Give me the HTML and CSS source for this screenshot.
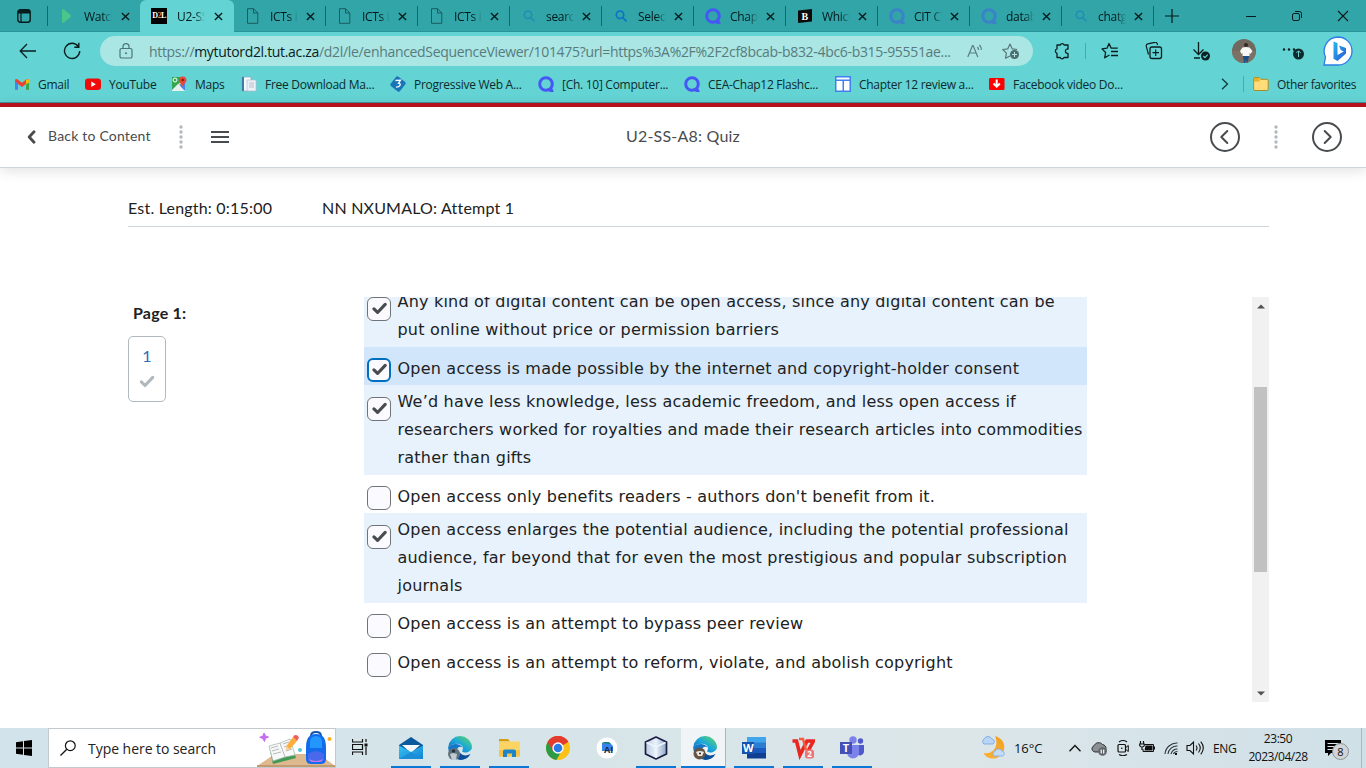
FILE: index.html
```html
<!DOCTYPE html>
<html lang="en">
<head>
<meta charset="utf-8">
<title>U2-SS-A8: Quiz</title>
<link rel="stylesheet" href="styles.css">
</head>
<body>
<svg class="defs" width="0" height="0" aria-hidden="true">
  <defs>
    <linearGradient id="edgeG" x1="0" y1="1" x2="1" y2="0"><stop offset="0" stop-color="#0b5db5"/><stop offset=".5" stop-color="#1ba7dc"/><stop offset="1" stop-color="#62dc5a"/></linearGradient>
    <linearGradient id="bingG" x1="0" y1="0" x2="1" y2="1"><stop offset="0" stop-color="#29b9ee"/><stop offset="1" stop-color="#2855d8"/></linearGradient>
    <linearGradient id="mailG" x1="0" y1="0" x2="1" y2="1"><stop offset="0" stop-color="#35c5f4"/><stop offset="1" stop-color="#1382d4"/></linearGradient>
    <linearGradient id="moonG" x1="0" y1="0" x2="0" y2="1"><stop offset="0" stop-color="#f2a01e"/><stop offset="1" stop-color="#fbb034"/></linearGradient>
    <linearGradient id="cubeG" x1="0" y1="0" x2="1" y2="0"><stop offset="0" stop-color="#bccbe0"/><stop offset=".5" stop-color="#e9f3fb"/><stop offset="1" stop-color="#8ba6c6"/></linearGradient>
  </defs>
  <symbol id="x" viewBox="0 0 10 10"><path d="M1 1l8 8M9 1l-8 8" stroke="#071a1c" stroke-width="1.5"/></symbol>
  <symbol id="page" viewBox="0 0 16 16"><path d="M2.500.7h6l4.300 4.300v10.300H2.500zM8.500.7V5h4.300" fill="none" stroke="#1a5a60" stroke-width="1"/></symbol>
  <symbol id="lens" viewBox="0 0 16 16"><circle cx="7" cy="6.700" r="3.700" fill="none" stroke="currentColor" stroke-width="1.600"/><path d="M9.700 9.500l3.800 3.800" stroke="currentColor" stroke-width="1.700"/></symbol>
  <symbol id="quiz" viewBox="0 0 16 16"><circle cx="8" cy="8" r="6.300" fill="none" stroke="currentColor" stroke-width="3"/><path d="M9 12.500h5.500L15.800 16h-4z" fill="currentColor"/></symbol>
  <symbol id="tick" viewBox="0 0 14 12"><path d="M1.800 6.300l3.400 3.400L12.300 2.200" fill="none" stroke="currentColor" stroke-width="2.900" stroke-linecap="round" stroke-linejoin="round"/></symbol>
  <symbol id="dots" viewBox="0 0 4 24"><path d="M2 2v20.500" stroke="#b1b9be" stroke-width="3.400" stroke-linecap="round" stroke-dasharray="0 5"/></symbol>
  <symbol id="edge" viewBox="0 0 24 24"><path d="M12 0a12 12 0 0 1 12 11c0 5-7 6.500-9.500 4.800-1-.8.8-1.800.4-4.300C14 7.500 6 6 .3 11A12 12 0 0 1 12 0z" fill="url(#edgeG)"/><path d="M.2 11C4.500 6.300 13 7.500 14.700 11.700 12 9.500 8.500 11.500 9 15.500c.6 5 7 7 13 3A12 12 0 0 1 .2 11z" fill="#1478c8"/><path d="M12 16.800c3 3.500 7 3 10.500 1.200A12 12 0 0 1 12 24c-3-1-4-4-3-8z" fill="#0b4d99"/></symbol>
</svg>

<header class="browser">
  <nav class="tabs">
    <div class="tab-menu"><svg width="14" height="14" viewBox="0 0 14 14"><rect x=".8" y=".8" width="12.400" height="12.400" rx="2.500" fill="none" stroke="#071a1c" stroke-width="1.400"/><path d="M1 2.800h12" stroke="#071a1c" stroke-width="3.400"/><path d="M4 4v9" stroke="#071a1c" stroke-width="1.200"/></svg></div>
    <div class="tab sep"><svg class="fav" viewBox="0 0 16 16"><path d="M1 2.500C1 1 2 .8 3 1.600l6.200 5.200c.9.800.9 1.600 0 2.400L3 14.500c-1 .8-2 .3-2-1z" fill="#4cc58b"/></svg><span class="name">Watch</span><svg class="close"><use href="#x"/></svg></div>
    <div class="tab active"><span class="fav d2l">D<i>2</i>L</span><span class="name">U2-SS</span><svg class="close"><use href="#x"/></svg></div>
    <div class="tab"><svg class="fav"><use href="#page"/></svg><span class="name">ICTs in</span><svg class="close"><use href="#x"/></svg></div>
    <div class="tab sep"><svg class="fav"><use href="#page"/></svg><span class="name">ICTs in</span><svg class="close"><use href="#x"/></svg></div>
    <div class="tab sep"><svg class="fav"><use href="#page"/></svg><span class="name">ICTs in</span><svg class="close"><use href="#x"/></svg></div>
    <div class="tab sep"><svg class="fav faint-blue"><use href="#lens"/></svg><span class="name">search</span><svg class="close"><use href="#x"/></svg></div>
    <div class="tab sep"><svg class="fav blue"><use href="#lens"/></svg><span class="name">Select</span><svg class="close"><use href="#x"/></svg></div>
    <div class="tab sep"><svg class="fav violet"><use href="#quiz"/></svg><span class="name">Chap</span><svg class="close"><use href="#x"/></svg></div>
    <div class="tab sep"><svg class="fav" viewBox="0 0 16 16"><path d="M1 2.500L15 1v12.500L1 15z" fill="#0b0b0b"/><text x="4.500" y="11.700" class="b-mark">B</text></svg><span class="name">Which</span><svg class="close"><use href="#x"/></svg></div>
    <div class="tab sep"><svg class="fav faint-violet"><use href="#quiz"/></svg><span class="name">CIT Ch</span><svg class="close"><use href="#x"/></svg></div>
    <div class="tab sep"><svg class="fav faint-violet"><use href="#quiz"/></svg><span class="name">datab</span><svg class="close"><use href="#x"/></svg></div>
    <div class="tab sep"><svg class="fav faint-blue"><use href="#lens"/></svg><span class="name">chatg</span><svg class="close"><use href="#x"/></svg></div>
    <div class="new-tab sep"><svg width="14" height="14" viewBox="0 0 14 14"><path d="M7 0v14M0 7h14" stroke="#071a1c" stroke-width="1.200"/></svg></div>
    <div class="window-buttons">
      <svg viewBox="0 0 12 12"><path d="M1 6.500h10" stroke="#071a1c"/></svg>
      <svg viewBox="0 0 12 12"><rect x="1.500" y="3.500" width="7" height="7" rx="1.500" fill="none" stroke="#071a1c"/><path d="M4 1.500h4.500a2 2 0 0 1 2 2V8" fill="none" stroke="#071a1c"/></svg>
      <svg viewBox="0 0 12 12"><path d="M1 1l10 10M11 1L1 11" stroke="#071a1c" stroke-width="1.100"/></svg>
    </div>
  </nav>

  <div class="toolbar">
    <svg class="back" viewBox="0 0 18 16"><path d="M17 8H1.500M8 1L1.200 8 8 15" fill="none" stroke="#0a1e20" stroke-width="1.300"/></svg>
    <svg class="reload" viewBox="0 0 18 18"><path d="M15.300 4.500A7.600 7.600 0 1 0 16.700 9M15.800 .8v4.400h-4.500" fill="none" stroke="#0a1e20" stroke-width="1.400"/></svg>
    <div class="address">
      <svg class="lock" viewBox="0 0 14 16"><rect x="1" y="5.500" width="12" height="9.500" rx="1.600" fill="none" stroke="#4f7577" stroke-width="1.200"/><path d="M4 5.500V3.600a3 3 0 0 1 6 0v1.900" fill="none" stroke="#4f7577" stroke-width="1.200"/><circle cx="7" cy="10.200" r="1" fill="#4f7577"/></svg>
      <span class="url">https://<b>mytutord2l.tut.ac.za</b>/d2l/le/enhancedSequenceViewer/101475?url=https%3A%2F%2F2cf8bcab-b832-4bc6-b315-95551ae...</span>
      <svg class="read" viewBox="0 0 16 14"><path d="M.8 13L5.500 1.500h.6L10.800 13M2.500 9h6.700M10.500 3a4 4 0 0 1 1 3M12.500 1a6.500 6.500 0 0 1 1.800 5" fill="none" stroke="#5b7d7f" stroke-width="1.200"/></svg>
      <svg class="addfav" viewBox="0 0 18 18"><path d="M8 14l-4.500 2.200.9-5L.8 7.500l5-.7L8 2l2.200 4.800 5 .7" fill="none" stroke="#5b7778" stroke-width="1.200" stroke-linejoin="round"/><circle cx="12.500" cy="12.500" r="4.500" fill="#4f6c6e"/><path d="M12.500 10v5M10 12.500h5" stroke="#a9e6e4"/></svg>
    </div>
    <svg class="tool puzzle" viewBox="0 0 18 18"><path d="M4 3h3.300a2 2 0 0 1 3.800 0H15v4h-1a2.300 2.300 0 0 0 0 4.400h1v4.100h-4a2 2 0 0 1-3.800 0H4v-4.200a2.300 2.300 0 0 1 0-4.400z" fill="none" stroke="#0a1e20" stroke-width="1.300" stroke-linejoin="round"/></svg>
    <i class="rule"></i>
    <svg class="tool favs" viewBox="0 0 18 18"><path d="M8.500 13L3.700 15.800l.9-5.300L1 6.900l5-.7L8 1.500l2.200 4.700h6.500M10 9.500h7M10 13.500h7" fill="none" stroke="#0a1e20" stroke-width="1.300" stroke-linejoin="round"/></svg>
    <svg class="tool collections" viewBox="0 0 18 18"><path d="M3.500 12.500L1.300 4.300a2 2 0 0 1 1.500-2.500l7-1.500a2 2 0 0 1 2.400 1.500l.4 1.200" fill="none" stroke="#0a1e20" stroke-width="1.200"/><rect x="5" y="5" width="11.500" height="11.500" rx="2" fill="none" stroke="#0a1e20" stroke-width="1.300"/><path d="M10.700 7.500v6.500M7.500 10.700H14" stroke="#0a1e20" stroke-width="1.200"/></svg>
    <svg class="tool downloads" viewBox="0 0 18 20"><path d="M6.500 1v12M1.500 8.500l5 5 5-5M2 17h6" fill="none" stroke="#0a1e20" stroke-width="1.300"/><circle cx="13.500" cy="15" r="4.500" fill="#0b2224"/><path d="M11.300 15l1.600 1.600 2.800-3" fill="none" stroke="#63d3d3" stroke-width="1.200"/></svg>
    <svg class="avatar" viewBox="0 0 24 24"><circle cx="12" cy="12" r="12" fill="#716960"/><path d="M0 12h24a12 12 0 0 1-24 0z" fill="#7d7064"/><circle cx="14" cy="6" r="2" fill="#342824"/><path d="M10.500 8.500q3.500-1 7 0l3 3.500-2 3-1-1v3h-7v-3l-1 1L8 12z" fill="#f7f7f5"/><path d="M11 17h6l-1.300 6.500h-1.200L14 20l-.8 4H12z" fill="#1c4f86"/></svg>
    <svg class="more" viewBox="0 0 22 18"><g fill="#0a1e20"><circle cx="2" cy="7.500" r="1.200"/><circle cx="7" cy="7.500" r="1.200"/><circle cx="12" cy="7.500" r="1.200"/></g><circle cx="16.500" cy="12" r="5.500" fill="#102a2c"/><path d="M16.500 15V9M14.300 11l2.200-2.200 2.200 2.200" fill="none" stroke="#68cccd"/></svg>
    <svg class="bing" viewBox="0 0 30 30"><path d="M15 1a14 14 0 1 1 0 28H1l1.500-8A14 14 0 0 1 15 1z" fill="#fff" stroke="#2b7ee8" stroke-width="1.300"/><path d="M10.500 5.500l4 1.400v12l6.300-3.500-3.100-1.500-1.700-4.300 7 2.500v5.300L14.500 25l-4-2.300z" fill="url(#bingG)"/></svg>
  </div>

  <div class="bookmarks">
    <div class="mark w71"><svg viewBox="0 0 16 16"><path d="M1 3.500v10h3V8l4 3 4-3v5.500h3v-10L13 3 8 6.700 3 3z" fill="#ea4335"/><path d="M1 5v8.500h3V7.700z" fill="#4285f4"/><path d="M15 5v8.500h-3V7.700z" fill="#34a853"/><path d="M12 4l2-1 1 1v2.500l-3 2z" fill="#fbbc04"/></svg><span>Gmail</span></div>
    <div class="mark w87"><svg viewBox="0 0 16 16"><rect y="2.500" width="16" height="11.500" rx="3.200" fill="#f00b0b"/><path d="M6.300 5.500l4.500 2.700-4.500 2.700z" fill="#fff"/></svg><span>YouTube</span></div>
    <div class="mark w69"><svg viewBox="0 0 16 16"><path d="M1 1h13v13H1z" fill="#33a852"/><path d="M1 14L14 2v12z" fill="#4285f4"/><path d="M1 15L11 4l2 2-9 9z" fill="#f5df75"/><path d="M1 14l6-6 7 7H1z" fill="#e8f0ee"/><path d="M8 8l6 6V9z" fill="#4285f4"/><circle cx="4" cy="4" r="2" fill="none" stroke="#fff"/><path d="M11.500 11C11 8 8 7 8 4.200a3.700 3.700 0 0 1 7.400 0C15.400 7 12 8 11.500 11z" fill="#e8453c"/><circle cx="11.700" cy="4" r="1.300" fill="#822119"/></svg><span>Maps</span></div>
    <div class="mark w149"><svg viewBox="0 0 16 16"><path d="M1 1h9v14H1z" fill="#f5fafc" stroke="#7ea9c1" stroke-width=".7"/><path d="M1 1h2v14H1z" fill="#407da5"/><path d="M6 4h9v11H6z" fill="#edf1f7" stroke="#b0bdcc" stroke-width=".7"/><path d="M8 7h5M8 9h5M8 11h5" stroke="#b8c0cd"/></svg><span>Free Download Ma...</span></div>
    <div class="mark w148"><svg viewBox="0 0 16 16"><rect x="2" y="2" width="12" height="12" rx="2" fill="#1a75b8" transform="rotate(38 8 8)"/><path d="M5.500 4.500l5-.3-2 3c3 .3 2 4-2.500 4" fill="none" stroke="#fff" stroke-width="1.300"/></svg><span>Progressive Web A...</span></div>
    <div class="mark w146"><svg class="violet"><use href="#quiz"/></svg><span>[Ch. 10] Computer...</span></div>
    <div class="mark w151"><svg class="violet"><use href="#quiz"/></svg><span>CEA-Chap12 Flashc...</span></div>
    <div class="mark w154"><svg viewBox="0 0 16 16"><path d="M0 0h16v16H0z" fill="#3f7ff0"/><path d="M1.500 1.500h13v2h-13zM1.500 5h6v9.500h-6zM9 5h5.500v9.500H9z" fill="#fff"/></svg><span>Chapter 12 review a...</span></div>
    <div class="mark w230"><svg viewBox="0 0 16 16"><rect y="2" width="15.500" height="12" rx="1.200" fill="#f00"/><path d="M7.700 3.500v7M4.500 7.500l3.200 3.200 3.200-3.200" fill="none" stroke="#fff" stroke-width="2"/></svg><span>Facebook video Do...</span></div>
    <svg class="overflow" viewBox="0 0 8 12"><path d="M1 .7L6.500 6 1 11.300" fill="none" stroke="#0e3a3c" stroke-width="1.300"/></svg>
    <i class="rule"></i>
    <div class="mark others"><svg viewBox="0 0 16 16"><path d="M.6 3V13.200q0 1.300 1.300 1.300h12q1.300 0 1.300-1.300V4.500q0-1.200-1.300-1.200H8L6.300 1.600H2Q.6 1.600.6 3z" fill="#ffdc78" stroke="#a8841c" stroke-width=".9"/><path d="M.8 5.500h5L8 3.300H6.300L5.500 1.900H1z" fill="#e9b22c"/></svg><span>Other favorites</span></div>
  </div>
</header>

<div class="viewer-bar">
  <svg class="chev" viewBox="0 0 9 14"><path d="M7 1.800L2.200 7 7 12.200" fill="none" stroke="#494c4e" stroke-width="2.800" stroke-linecap="round" stroke-linejoin="round"/></svg>
  <span class="back-text">Back to Content</span>
  <svg class="dots"><use href="#dots"/></svg>
  <svg class="burger" viewBox="0 0 18 14"><path d="M0 2h18M0 7h18M0 12h18" stroke="#494c4e" stroke-width="2"/></svg>
  <h1 class="title">U2-SS-A8: Quiz</h1>
  <svg class="circle" viewBox="0 0 30 30"><circle cx="15" cy="15" r="14" fill="none" stroke="#494c4e" stroke-width="2"/><path d="M17.300 9l-6 6 6 6" fill="none" stroke="#494c4e" stroke-width="2" stroke-linecap="round" stroke-linejoin="round"/></svg>
  <svg class="dots right-dots"><use href="#dots"/></svg>
  <svg class="circle" viewBox="0 0 30 30"><circle cx="15" cy="15" r="14" fill="none" stroke="#494c4e" stroke-width="2"/><path d="M12.700 9l6 6-6 6" fill="none" stroke="#494c4e" stroke-width="2" stroke-linecap="round" stroke-linejoin="round"/></svg>
</div>

<main class="quiz">
  <div class="attempt"><span class="est">Est. Length: 0:15:00</span><span class="who">NN NXUMALO: Attempt 1</span></div>
  <div class="columns">
    <aside class="pages">
      <h2>Page 1:</h2>
      <div class="page-box"><span>1</span><svg><use href="#tick"/></svg></div>
    </aside>
    <div class="answers">
      <ul class="options">
        <li class="option multi on first"><span class="box"><svg><use href="#tick"/></svg></span><p>Any kind of digital content can be open access, since any digital content can be<br>put online without price or permission barriers</p></li>
        <li class="option focus"><span class="box"><svg><use href="#tick"/></svg></span><p>Open access is made possible by the internet and copyright-holder consent</p></li>
        <li class="option multi on"><span class="box"><svg><use href="#tick"/></svg></span><p>We’d have less knowledge, less academic freedom, and less open access if<br>researchers worked for royalties and made their research articles into commodities<br>rather than gifts</p></li>
        <li class="option"><span class="box"></span><p>Open access only benefits readers - authors don't benefit from it.</p></li>
        <li class="option multi on"><span class="box"><svg><use href="#tick"/></svg></span><p>Open access enlarges the potential audience, including the potential professional<br>audience, far beyond that for even the most prestigious and popular subscription<br>journals</p></li>
        <li class="option raised"><span class="box"></span><p>Open access is an attempt to bypass peer review</p></li>
        <li class="option last"><span class="box"></span><p>Open access is an attempt to reform, violate, and abolish copyright</p></li>
      </ul>
    </div>
    <div class="scrollbar"><svg viewBox="0 0 8 5"><path d="M0 4.500h8L4 .5z" fill="#505050"/></svg><i class="thumb"></i><svg class="down" viewBox="0 0 8 5"><path d="M0 .5h8l-4 4z" fill="#505050"/></svg></div>
  </div>
</main>

<footer class="taskbar">
  <div class="start"><svg width="16" height="16" viewBox="0 0 16 16"><path d="M0 2.200L7 1.300v6.200H0zM8 1.100L16 0v7.500H8zM0 8.500h7v6.300L0 13.800zM8 8.500h8V16l-8-1.100z" fill="#000"/></svg></div>
  <div class="search">
    <svg class="mag" viewBox="0 0 16 16"><circle cx="10.300" cy="5.700" r="4.900" fill="none" stroke="#111" stroke-width="1.200"/><path d="M6.800 9.200L.5 15.500" stroke="#111" stroke-width="1.300"/></svg>
    <span>Type here to search</span>
    <svg class="art" viewBox="0 0 78 38"><path d="M0 37l18-12h44l16 12z" fill="#deb98f"/><path d="M0 36h78v2H0z" fill="#c39b70"/><path d="M7 4l1.500 3 3 1-3 1.300-1 3.200-1.800-3-3-1.200L6 7z" fill="#c66df0" stroke="#c66df0"/><path d="M12 18l4 17 23-6-1-3-22 5z" fill="#3f9b55"/><path d="M12 17l11-3 10-4 5 16-10 2-12 4z" fill="#f8f8f8" stroke="#9db5a5" stroke-width=".7"/><path d="M23 14l5 14M14 19l7-2M15 22l7-2M16 25l8-2M26 15l6-2M27 18l6-2M29 22l6-2" stroke="#a3ada8" stroke-width=".8"/><path d="M36 8l4 4-7 8-4 1.500.5-4.500z" fill="#ffad3a"/><path d="M36 8l1-1.500q3-1.500 5 2L40 12z" fill="#ef5e58"/><path d="M29.500 17l3 3-4 2z" fill="#f1d4ad"/><circle cx="43" cy="21" r="2" fill="#4ec9e3"/><circle cx="72.500" cy="10" r="2" fill="#ffad20"/><path d="M54 7q0-4 5-4t5 4" fill="none" stroke="#1452ad" stroke-width="2"/><path d="M49 18q0-13 10-13t10 13v12q0 5-5 5H54q-5 0-5-5z" fill="#126bea"/><path d="M53 13q0-6 6-6t6 6v6H53z" fill="#2497ff"/><path d="M51 25q8-6 16 0v4q0 4-4 4h-8q-4 0-4-4z" fill="#4968eb"/><path d="M52 30q7 4 14 0-1 3-4 3h-7q-2 0-3-3z" fill="#c579ef"/></svg>
  </div>
  <div class="app task-view"><svg viewBox="0 0 16 16"><path d="M.5 0v3h10V0M.5 16v-3h10v3M.5 5.500h10v5H.5zM14 0v3M14 8v8" fill="none" stroke="#111" stroke-width="1.200"/><path d="M12.500 4.500h3v3h-3z" fill="#111"/></svg></div>
  <div class="app run"><svg viewBox="0 0 24 24"><path d="M0 9l12-8 12 8v6H0z" fill="#0b5a9e"/><path d="M3 9h18l-9 8z" fill="#f2f8fc"/><path d="M0 9.500L12 16 24 9.500V23H0z" fill="url(#mailG)"/><path d="M0 23L12 16l12 7z" fill="#1c8ed8"/></svg></div>
  <div class="app run"><svg viewBox="0 0 24 24"><use href="#edge"/><circle cx="6" cy="18" r="6" fill="#61717b"/><circle cx="5.500" cy="15" r="1.700" fill="#24323e"/><path d="M2 18l3-1 4 1-1 6H4z" fill="#c0cad2"/></svg></div>
  <div class="app run"><svg viewBox="0 0 24 24"><path d="M2 3h9l2 2.500H2z" fill="#d79b0b"/><path d="M2 5.500h21v15H2z" fill="#fcd462"/><path d="M2 14h21v6.500H2z" fill="#f9c345"/><path d="M6 21v-5.500q0-2 2-2h9q2 0 2 2V21h-4v-3.500h-5V21z" fill="#1d84c8"/></svg></div>
  <div class="app"><svg viewBox="0 0 24 24"><circle cx="12" cy="12" r="12" fill="#fbc116"/><path d="M12 12L1.600 6A12 12 0 0 1 22.400 6z" fill="#e33b2e"/><path d="M1.600 6a12 12 0 0 0 8.800 17.900L15.500 15 12 12z" fill="#2b9b48"/><path d="M1.600 6L7 15l5-3V6h10.400A12 12 0 0 0 1.600 6z" fill="#e33b2e"/><circle cx="12" cy="12" r="5.700" fill="#fff"/><circle cx="12" cy="12" r="4.300" fill="#297ce8"/></svg></div>
  <div class="app"><svg viewBox="0 0 24 24"><circle cx="12" cy="12" r="10.500" fill="#fff"/><path d="M7 7h8l3 3v5H7z" fill="#3a83ea"/><path d="M7 7l2-1h5l2 2z" fill="#16806c"/><text x="9" y="17" class="ai">AI</text></svg></div>
  <div class="app run"><svg viewBox="0 0 24 24"><path d="M12 1l10.500 5v12L12 23 1.500 18V6z" fill="url(#cubeG)" stroke="#1b1c46" stroke-width="1.700" stroke-linejoin="round"/><path d="M2.500 6.500L12 11l9.500-4.500M12 11v11" stroke="#eef6ff" fill="none" stroke-width="1.500"/></svg></div>
  <div class="app run current"><svg viewBox="0 0 24 24"><use href="#edge"/><circle cx="6.500" cy="17.500" r="6" fill="#665648"/><path d="M3 16q3.500-2 8 0l-2 4H5z" fill="#ece9e3"/><circle cx="7" cy="17.500" r="1" fill="#322"/></svg></div>
  <div class="app run word"><svg viewBox="0 0 24 24"><path d="M5 1h19v6H5z" fill="#41a5ee"/><path d="M5 6.500h19V12H5z" fill="#2b7cd3"/><path d="M5 12h19v5.500H5z" fill="#185abd"/><path d="M5 17h19v5.500H5z" fill="#103f91"/><path d="M0 6h12v12H0z" fill="#1653ad"/><text x="1" y="16" class="glyph">W</text></svg></div>
  <div class="app run"><svg viewBox="0 0 24 24"><path d="M1.500 5h4l3.500 14L16 5h6.500l-6 11" fill="none" stroke="#e9261f" stroke-width="3.600" stroke-linejoin="miter"/><path d="M8 3h4l3 11" fill="none" stroke="#f85b3e" stroke-width="2.400"/><rect x="14" y="13.500" width="9" height="9" rx="2.500" fill="#ef7476"/><text x="16.200" y="20.800" class="two">2</text></svg></div>
  <div class="app run"><svg viewBox="0 0 24 24"><circle cx="13" cy="4" r="3.700" fill="#7b83eb"/><circle cx="20.500" cy="5" r="2.700" fill="#5059c9"/><path d="M17 9h7v7a4 4 0 0 1-7 2z" fill="#5059c9"/><path d="M7 9h12v7.500a6 6 0 0 1-12 0z" fill="#7b83eb"/><path d="M0 6h12v12H0z" fill="#464eb8"/><text x="2.800" y="16" class="glyph">T</text></svg></div>

  <div class="tray">
    <svg class="weather" viewBox="0 0 24 24"><path d="M14 0c11 3 13 16 2 22C9 24 3 20 3 17c7 2 16-5 11-17z" fill="url(#moonG)"/><path d="M3 8a3 3 0 0 1 0-5 4.500 4.500 0 0 1 8 0 2.700 2.700 0 0 1 1 5z" fill="#b9d5f6" stroke="#83aee6"/><path d="M13 20a3 3 0 0 1 1-5 4 4 0 0 1 7 0 2.700 2.700 0 0 1 1 5z" fill="#c4dbf6" stroke="#8db4e6"/></svg>
    <span class="temp">16°C</span>
    <svg class="up" viewBox="0 0 12 8"><path d="M.5 7.300L6 1.500l5.500 5.800" fill="none" stroke="#111" stroke-width="1.300"/></svg>
    <svg class="ti" viewBox="0 0 16 16"><path d="M2.500 11.500A3.200 3.200 0 0 1 3 5.800a5 5 0 0 1 8.500-1.300A4 4 0 0 1 15 9v3H4z" fill="#8a9094" stroke="#222" stroke-width=".9"/><circle cx="11.500" cy="11.500" r="4.300" fill="#606468"/><path d="M10.200 9.500v4M12.700 9.500v4" stroke="#fff" stroke-width="1.200"/></svg>
    <svg class="ti" viewBox="0 0 16 16"><path d="M4 2q4-3 8 0M4 14.500q4 2.500 8 0" fill="none" stroke="#111" stroke-width="1.100"/><rect x="3" y="4.500" width="7.500" height="7.500" rx="1" fill="none" stroke="#111" stroke-width="1.200"/><path d="M10.800 7.500l2.500-2v6l-2.500-2" fill="none" stroke="#111"/><circle cx="6.800" cy="8.200" r=".8"/></svg>
    <svg class="ti" viewBox="0 0 16 16"><path d="M1.500 1v2.500M4.500 1v2.500M.7 4h4.600v1.500Q5 7 3 7T.7 5.500zM3 7v3" fill="none" stroke="#111" stroke-width="1.200"/><path d="M6 4.500h8.500v7H4V9" fill="none" stroke="#111"/><path d="M6.500 5.500h7v5H5.500z" fill="#111"/><path d="M15.500 6.500v3" stroke="#111"/></svg>
    <svg class="ti wifi" viewBox="0 0 16 16"><g fill="none" stroke="#29363b" stroke-width="1.100"><path d="M2 14A12 12 0 0 1 14.500 3M5 14a9 9 0 0 1 9.500-8M8 14q1.500-5 6.500-5M10.500 14q1-2.500 4-2.500"/></g><path d="M12 13h2v2h-2z" fill="#111"/></svg>
    <svg class="speaker" viewBox="0 0 18 16"><path d="M1 5.500h3L7.500 2v12L4 10.500H1zM10 5.500q2 2.500 0 5M12.500 3.500q3.500 4.500 0 9M14.800 1.700q5 6.300 0 12.600" fill="none" stroke="#111" stroke-width="1.100"/></svg>
    <span class="lang">ENG</span>
    <div class="clock"><span>23:50</span><span class="date">2023/04/28</span></div>
    <div class="notice"><svg viewBox="0 0 16 16"><path d="M0 0h16v13H6l-3 3v-3H0z" fill="#000"/><path d="M2.500 3.500h11M2.500 6.500h11M2.500 9.500h8" stroke="#dce6ea" stroke-width="1.200"/></svg><span class="badge">8</span></div>
    <i class="show-desktop"></i>
  </div>
</footer>
</body>
</html>
```
FILE: styles.css
```css
* { box-sizing: border-box; margin: 0; padding: 0; }
body { width: 1366px; height: 768px; overflow: hidden; background: #fff; font-family: "Open Sans", "Noto Sans", sans-serif; display: flex; flex-direction: column; }
.defs { position: absolute; }
svg { display: block; flex: none; }
i { font-style: normal; }

.browser { height: 103px; flex: none; background: #63d3d3; border-bottom: 1px solid #3d9499; font-size: 12px; color: #0d2c2e; }
.tabs { height: 32px; display: flex; background: #31a5a8; border-bottom: 1px solid #2a9397; }
.tab-menu { width: 47px; padding: 9px 0 0 17px; }
.tab, .new-tab { background: linear-gradient(#14676c, #14676c) no-repeat -9px 6px / 1px 20px; }
.tab { width: 92px; height: 32px; flex: none; display: flex; align-items: center; padding-left: 12px; }
.tab.sep, .new-tab.sep { background-position: 0 6px; }
.tab.sep:nth-child(2) { width: 93px; padding-left: 14px; }
.tab.active { height: 32px; background: #63d3d3; border-radius: 6px 6px 0 0; width: 94px; padding-left: 11px; margin-right: -1px; }
.fav { width: 16px; height: 16px; }
.name { width: 28px; margin-left: 9px; overflow: hidden; white-space: nowrap; letter-spacing: -.3px; -webkit-mask-image: linear-gradient(90deg, #000 65%, transparent); mask-image: linear-gradient(90deg, #000 65%, transparent); color: #04191b; }
.tab:nth-child(2) .name { margin-left: 7px; }
.active .name { margin-left: 10px; }
.close { width: 9px; height: 9px; margin-left: 8px; }
.tab:nth-child(2) .close, .active .close { margin-left: 9px; }
.blue { color: #0c72c9; }
.faint-blue { color: #218fb3; }
.violet { color: #4657f5; }
.faint-violet { color: #3c82c9; }
.d2l { background: #000; color: #fff; font: bold 8px/16px "Liberation Serif", serif; text-align: center; letter-spacing: -.6px; }
.d2l i { color: #e8833a; }
.b-mark { font: bold 10px "Liberation Serif", serif; fill: #fff; }
.new-tab { padding: 9px 0 0 12px; width: 92px; }
.window-buttons { display: flex; align-items: center; gap: 34px; }
.window-buttons svg { width: 12px; height: 12px; }

.toolbar { height: 38px; display: flex; align-items: center; }
.back { width: 18px; height: 16px; margin-left: 19px; }
.reload { width: 18px; height: 18px; margin-left: 26px; }
.address { width: 933px; height: 30px; margin-left: 19px; border-radius: 15px; background: #a9e6e4; display: flex; align-items: center; color: #597b7d; }
.lock { width: 14px; height: 16px; margin-left: 19px; }
.url { width: 804px; margin-left: 16px; font-size: 14px; white-space: nowrap; letter-spacing: -.32px; }
.url b { font-weight: 400; color: #0a1e20; }
.read { width: 16px; height: 14px; margin-left: 14px; }
.addfav { width: 18px; height: 18px; margin-left: 19px; }
.tool { width: 18px; height: 18px; }
.puzzle { margin-left: 20px; }
.rule { width: 1px; height: 16px; background: #4aaaab; }
.toolbar .rule { margin-left: 14px; }
.favs { margin-left: 15px; }
.collections { margin-left: 26px; }
.downloads { height: 20px; margin-left: 29px; }
.avatar { width: 24px; height: 24px; margin-left: 22px; }
.more { width: 22px; height: 18px; margin-left: 26px; }
.bing { width: 30px; height: 30px; margin-left: 19px; }

.bookmarks { height: 28px; display: flex; align-items: center; padding-left: 14px; }
.mark { display: flex; align-items: center; gap: 8px; white-space: nowrap; letter-spacing: -.28px; }
.mark svg { width: 16px; height: 16px; }
.w71 { width: 71px; } .w87 { width: 87px; } .w69 { width: 69px; } .w149 { width: 149px; } .w148 { width: 148px; }
.w69 { margin-right: 1px; margin-left: -1px; }
.w146 { width: 146px; } .w151 { width: 151px; } .w154 { width: 154px; } .w230 { width: 232px; }
.overflow { width: 8px; height: 12px; }
.bookmarks .rule { margin: 0 9px 0 14px; }
.others { letter-spacing: -.35px; }

.viewer-bar { height: 65px; flex: none; display: flex; align-items: center; border-top: 4px solid #b4121e; border-bottom: 1px solid #cdd5dc; box-shadow: 0 3px 12px rgba(0, 0, 0, .12); font-family: Lato, sans-serif; color: #494c4e; padding-left: 27px; }
.chev { width: 9px; height: 14px; }
.back-text { width: 103px; margin-left: 12px; font-size: 14px; letter-spacing: .2px; white-space: nowrap; padding-bottom: 3px; }
.dots { width: 4px; height: 24px; margin-left: 28px; }
.burger { width: 18px; height: 14px; margin-left: 28px; }
.title { font-size: 16px; font-weight: 400; width: 115px; margin-left: 397px; padding-bottom: 3px; white-space: nowrap; letter-spacing: .2px; }
.circle { width: 30px; height: 30px; }
.title + .circle { margin-left: 469px; }
.right-dots { margin: 0 34px; }

.quiz { flex: 1; width: 1141px; margin-left: 128px; color: #202122; }
.attempt { height: 59px; border-bottom: 1px solid #cdd5dc; padding-top: 29px; font: 16px/22px Lato, sans-serif; letter-spacing: .2px; display: flex; white-space: nowrap; }
.est { width: 194px; }
.columns { display: flex; height: 405px; margin-top: 70px; }
.pages { width: 236px; font-family: Lato, sans-serif; }
.pages h2 { font-size: 16px; line-height: 20px; letter-spacing: .2px; padding: 6px 0 13px 5px; }
.page-box { width: 38px; height: 66px; border: 1px solid #b1b9be; border-radius: 5px; display: flex; flex-direction: column; align-items: center; color: #b1b9be; padding-top: 9px; gap: 9px; }
.page-box span { font-size: 16px; line-height: 20px; color: #2a6db5; }
.page-box svg { width: 16px; height: 13px; }
.answers { width: 723px; height: 405px; overflow: hidden; }
.options { list-style: none; margin-top: -12px; }
.option { display: flex; height: 38px; padding-left: 3px; font: 16px/28px "DejaVu Sans", sans-serif; letter-spacing: .21px; white-space: nowrap; }
.option p { padding-top: 8px; margin-left: 6.500px; }
.box { width: 24px; height: 24px; margin-top: 11px; flex: none; border: 1px solid #6e7477; border-radius: 6px; background: #fbfbff; display: flex; align-items: center; justify-content: center; color: #494c4e; }
.box svg { width: 15px; height: 13px; margin-bottom: 1px; }
.multi { height: 90px; }
.first { height: 62px; }
.multi p { padding-top: 3px; }
.raised p { padding-top: 7px; }
.multi .box, .last .box { margin-top: 12px; }
.on { background: #e7f2fd; }
.focus { background: #d1e6fa; }
.focus .box { border: 2px solid #006fbf; }
.scrollbar { width: 17px; height: 405px; margin-left: 165px; background: #f1f1f1; display: flex; flex-direction: column; align-items: center; padding: 7px 0 6px; }
.scrollbar svg { width: 8px; height: 5px; }
.thumb { width: 13px; height: 185px; background: #c1c1c1; margin-top: 78px; }
.down { margin-top: auto; }

.taskbar { height: 40px; flex: none; display: flex; background: linear-gradient(90deg, #d2e3eb, #d7e5e9 45%, #dce6e9 70%, #cfe0e7); color: #111; }
.start { width: 48px; padding: 12px 16px; }
.search { width: 288px; height: 40px; border: 1px solid #c3c9cc; background: #fff; display: flex; align-items: center; color: #222; }
.mag { width: 16px; height: 16px; margin-left: 11px; }
.search span { width: 159px; margin-left: 12px; font-size: 14px; white-space: nowrap; letter-spacing: -.04px; }
.art { width: 78px; height: 38px; margin-left: 10px; }
.app { width: 49px; height: 40px; padding-top: 8px; display: flex; justify-content: center; }
.app svg { width: 24px; height: 24px; }
.task-view { width: 50px; }
.task-view svg { width: 16px; height: 16px; margin: 3px 2px 0 0; }
.run { background: linear-gradient(#0a78d4, #0a78d4) no-repeat center bottom / 40px 2px; }
.current { background: linear-gradient(#0a78d4, #0a78d4) no-repeat center bottom / 100% 2px, #f0f4f6; border-right: 1px solid #a9b5bb; width: 45px; margin: 0 2px 0 1px; padding-left: 3px; }
.word { margin-left: 1px; }
.glyph { font: bold 11px "Open Sans", sans-serif; fill: #fff; }
.ai { font: bold 9px "Open Sans", sans-serif; fill: #142c43; }
.two { font: bold 8px "Open Sans", sans-serif; fill: #fff; }
.tray { display: flex; align-items: center; margin-left: auto; width: 385px; font-size: 12px; }
.weather { width: 24px; height: 24px; }
.temp { width: 29px; margin-left: 9px; font-size: 13px; white-space: nowrap; letter-spacing: -.1px; }
.up { width: 12px; height: 8px; margin: 0 10px 0 26px; }
.ti { width: 16px; height: 16px; margin-right: 8px; }
.wifi { margin-right: 6px; }
.speaker { width: 18px; height: 16px; margin-left: 1px; }
.lang { width: 24px; margin-left: 9px; letter-spacing: -.3px; }
.clock { width: 60px; margin-left: 11px; display: flex; flex-direction: column; align-items: center; line-height: 18px; letter-spacing: -.45px; white-space: nowrap; }
.notice { position: relative; margin-left: 17px; width: 36px; height: 16px; }
.notice svg { width: 16px; height: 16px; }
.badge { position: absolute; left: 7px; top: 3px; width: 17px; height: 17px; border-radius: 50%; background: #d0d4d6; border: 1px solid #8d9294; font-size: 11px; line-height: 15px; text-align: center; }
.show-desktop { width: 1px; height: 40px; background: #a9b8bf; }
```
